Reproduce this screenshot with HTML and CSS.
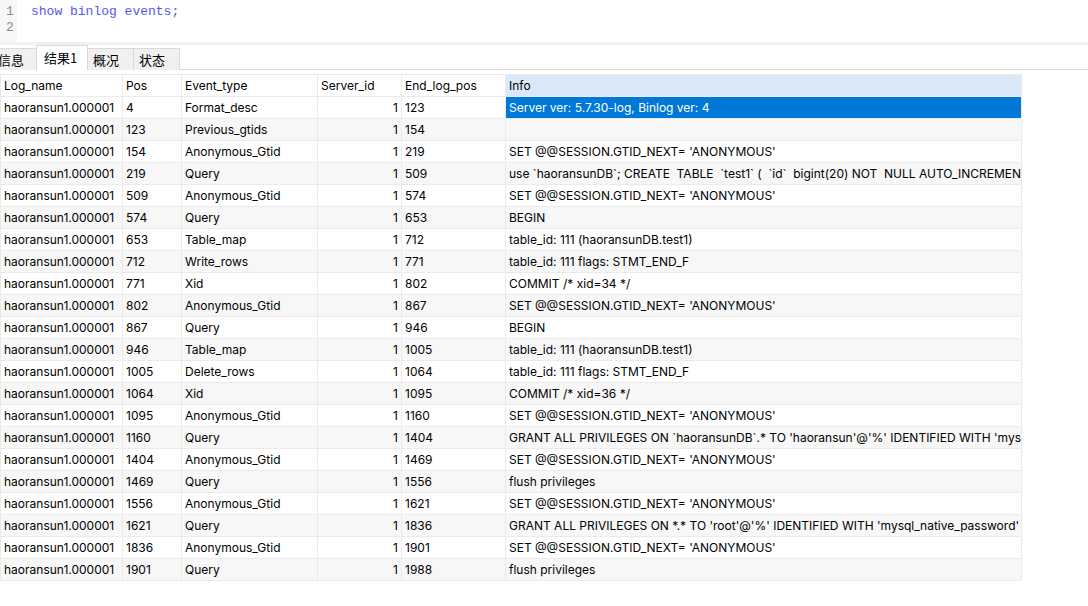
FILE: index.html
```html
<!DOCTYPE html>
<html lang="zh">
<head>
<meta charset="utf-8">
<title>show binlog events</title>
<link rel="stylesheet" href="styles.css">
</head>
<body>
<div class="editor">
  <div class="gutter"><div>1</div><div>2</div></div>
  <div class="code"><div>show binlog events;</div><div>&nbsp;</div></div>
</div>
<div class="splitter"></div>
<div class="tabbar">
  <div class="tab first">信息</div>
  <div class="tab active">结果1</div>
  <div class="tab">概况</div>
  <div class="tab">状态</div>
</div>
<div class="grid-wrap">
<table class="grid">
  <colgroup>
    <col class="c1"><col class="c2"><col class="c3"><col class="c4"><col class="c5"><col class="c6">
  </colgroup>
  <thead>
    <tr><th>Log_name</th><th>Pos</th><th>Event_type</th><th>Server_id</th><th>End_log_pos</th><th class="sorted">Info</th></tr>
  </thead>
  <tbody>
    <tr><td>haoransun1.000001</td><td>4</td><td>Format_desc</td><td class="num">1</td><td>123</td><td class="sel">Server ver: 5.7.30-log, Binlog ver: 4</td></tr>
    <tr><td>haoransun1.000001</td><td>123</td><td>Previous_gtids</td><td class="num">1</td><td>154</td><td></td></tr>
    <tr><td>haoransun1.000001</td><td>154</td><td>Anonymous_Gtid</td><td class="num">1</td><td>219</td><td>SET @@SESSION.GTID_NEXT= 'ANONYMOUS'</td></tr>
    <tr><td>haoransun1.000001</td><td>219</td><td>Query</td><td class="num">1</td><td>509</td><td>use `haoransunDB`; CREATE  TABLE  `test1` (  `id`  bigint(20) NOT  NULL AUTO_INCREMENT,  `name`  varchar(255)</td></tr>
    <tr><td>haoransun1.000001</td><td>509</td><td>Anonymous_Gtid</td><td class="num">1</td><td>574</td><td>SET @@SESSION.GTID_NEXT= 'ANONYMOUS'</td></tr>
    <tr><td>haoransun1.000001</td><td>574</td><td>Query</td><td class="num">1</td><td>653</td><td>BEGIN</td></tr>
    <tr><td>haoransun1.000001</td><td>653</td><td>Table_map</td><td class="num">1</td><td>712</td><td>table_id: 111 (haoransunDB.test1)</td></tr>
    <tr><td>haoransun1.000001</td><td>712</td><td>Write_rows</td><td class="num">1</td><td>771</td><td>table_id: 111 flags: STMT_END_F</td></tr>
    <tr><td>haoransun1.000001</td><td>771</td><td>Xid</td><td class="num">1</td><td>802</td><td>COMMIT /* xid=34 */</td></tr>
    <tr><td>haoransun1.000001</td><td>802</td><td>Anonymous_Gtid</td><td class="num">1</td><td>867</td><td>SET @@SESSION.GTID_NEXT= 'ANONYMOUS'</td></tr>
    <tr><td>haoransun1.000001</td><td>867</td><td>Query</td><td class="num">1</td><td>946</td><td>BEGIN</td></tr>
    <tr><td>haoransun1.000001</td><td>946</td><td>Table_map</td><td class="num">1</td><td>1005</td><td>table_id: 111 (haoransunDB.test1)</td></tr>
    <tr><td>haoransun1.000001</td><td>1005</td><td>Delete_rows</td><td class="num">1</td><td>1064</td><td>table_id: 111 flags: STMT_END_F</td></tr>
    <tr><td>haoransun1.000001</td><td>1064</td><td>Xid</td><td class="num">1</td><td>1095</td><td>COMMIT /* xid=36 */</td></tr>
    <tr><td>haoransun1.000001</td><td>1095</td><td>Anonymous_Gtid</td><td class="num">1</td><td>1160</td><td>SET @@SESSION.GTID_NEXT= 'ANONYMOUS'</td></tr>
    <tr><td>haoransun1.000001</td><td>1160</td><td>Query</td><td class="num">1</td><td>1404</td><td>GRANT ALL PRIVILEGES ON `haoransunDB`.* TO 'haoransun'@'%' IDENTIFIED WITH 'mysql_native_password' AS '*'</td></tr>
    <tr><td>haoransun1.000001</td><td>1404</td><td>Anonymous_Gtid</td><td class="num">1</td><td>1469</td><td>SET @@SESSION.GTID_NEXT= 'ANONYMOUS'</td></tr>
    <tr><td>haoransun1.000001</td><td>1469</td><td>Query</td><td class="num">1</td><td>1556</td><td>flush privileges</td></tr>
    <tr><td>haoransun1.000001</td><td>1556</td><td>Anonymous_Gtid</td><td class="num">1</td><td>1621</td><td>SET @@SESSION.GTID_NEXT= 'ANONYMOUS'</td></tr>
    <tr><td>haoransun1.000001</td><td>1621</td><td>Query</td><td class="num">1</td><td>1836</td><td>GRANT ALL PRIVILEGES ON *.* TO 'root'@'%' IDENTIFIED WITH 'mysql_native_password' AS '*'</td></tr>
    <tr><td>haoransun1.000001</td><td>1836</td><td>Anonymous_Gtid</td><td class="num">1</td><td>1901</td><td>SET @@SESSION.GTID_NEXT= 'ANONYMOUS'</td></tr>
    <tr><td>haoransun1.000001</td><td>1901</td><td>Query</td><td class="num">1</td><td>1988</td><td>flush privileges</td></tr>
  </tbody>
</table>
</div>
</body>
</html>
```

FILE: styles.css
```css
html, body {
  margin: 0;
  padding: 0;
  background: #ffffff;
  width: 1088px;
  height: 606px;
  overflow: hidden;
}

body {
  font-family: "Noto Sans", "Noto Sans CJK SC", sans-serif;
  font-size: 13px;
  color: #000;
}

.editor {
  display: flex;
  height: 42px;
  background: #fff;
}

.gutter {
  width: 17px;
  background: #f7f7f7;
  padding-top: 4px;
  font-family: "Liberation Mono", monospace;
  font-size: 13px;
  line-height: 16px;
  color: #8c8c8c;
  text-indent: 6px;
  box-sizing: border-box;
}

.code {
  padding-top: 4px;
  padding-left: 14px;
  font-family: "Liberation Mono", monospace;
  font-size: 13px;
  line-height: 16px;
  color: #5656f0;
}

.splitter {
  height: 3px;
  background: #f0f0f0;
}

.tabbar {
  display: flex;
  align-items: flex-end;
  height: 25px;
  border-bottom: 1px solid #d9d9d9;
  box-sizing: border-box;
  margin-bottom: 4px;
  font-family: "Noto Sans CJK SC", sans-serif;
  font-size: 13px;
}

.tab {
  height: 22px;
  line-height: 21px;
  background: #f0f0f0;
  border: 1px solid #d9d9d9;
  border-bottom: none;
  border-left: none;
  box-sizing: border-box;
  padding: 0 7px 0 5px;
  margin-bottom: -1px;
  color: #000;
}

.tab.first {
  margin-left: -8px;
  width: 45px;
  padding-left: 6px;
}

.tab.active {
  background: #fff;
  height: 25px;
  line-height: 24px;
  width: 52px;
  padding-left: 7px;
  border-left: 1px solid #d9d9d9;
  margin-left: -1px;
  position: relative;
  z-index: 1;
}

.tab:nth-child(3), .tab:nth-child(4) {
  width: 46px;
}

.grid-wrap {
  width: 1021px;
}

.grid {
  border-collapse: collapse;
  table-layout: fixed;
  width: 1021px;
  font-family: "Inter", "Noto Sans", sans-serif;
  font-size: 12px;
}

.c1 { width: 122px; }
.c2 { width: 59px; }
.c3 { width: 136px; }
.c4 { width: 84px; }
.c5 { width: 104px; }
.c6 { width: 516px; }

.grid th, .grid td {
  height: 21px;
  padding: 0 3px;
  border: 1px solid #ebebeb;
  white-space: pre;
  overflow: hidden;
  text-overflow: clip;
  text-align: left;
  font-weight: normal;
  line-height: 21px;
}

.grid th {
  background: #fff;
}

.grid th.sorted {
  background: #d9e9f7;
}

.grid td.num {
  text-align: right;
}

.grid tbody tr:nth-child(odd) td {
  background: #fff;
}

.grid tbody tr:nth-child(even) td {
  background: #f7f7f7;
}

.grid td.sel {
  background: #0078d7 !important;
  color: #fff;
}
```
